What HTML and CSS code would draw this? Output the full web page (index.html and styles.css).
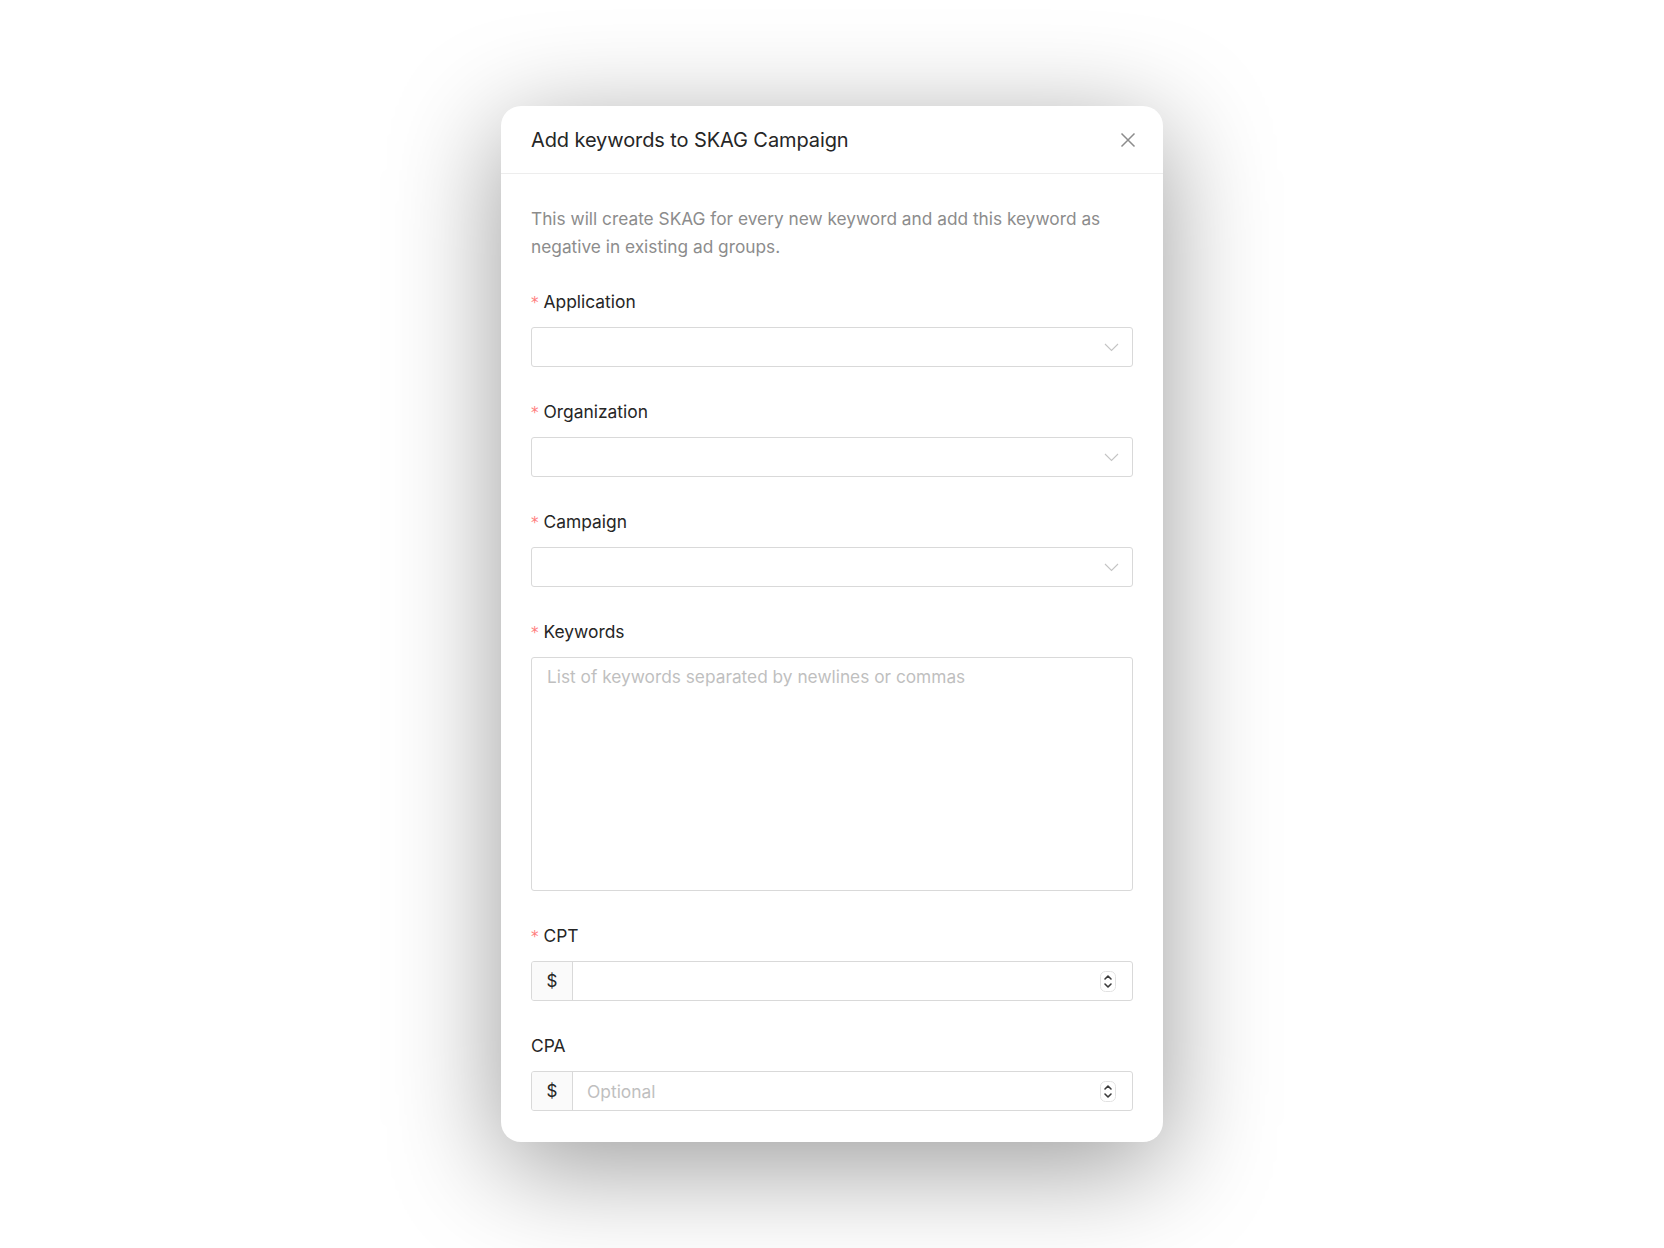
FILE: index.html
```html
<!DOCTYPE html>
<html lang="en">
<head>
    <meta charset="UTF-8">
    <meta name="viewport" content="width=device-width, initial-scale=1.0">
    <title>Add keywords to SKAG Campaign</title>
    <link rel="stylesheet" href="styles.css">
</head>
<body>
    <div class="modal">
        <div class="modal-header">
            <h2 class="modal-title">Add keywords to SKAG Campaign</h2>
            <button class="modal-close" type="button" aria-label="Close">
                <svg width="16" height="16" viewBox="0 0 16 16"><path d="M1.5 1.5 L14.5 14.5 M14.5 1.5 L1.5 14.5" /></svg>
            </button>
        </div>

        <div class="modal-body">
            <p class="intro">This will create SKAG for every new keyword and add this keyword as negative in existing ad groups.</p>

            <form class="form">
                <div class="form-item">
                    <label class="form-label required">Application</label>
                    <div class="select">
                        <svg class="select-arrow" width="15" height="9" viewBox="0 0 15 9"><path d="M1 1 L7.5 7.5 L14 1" /></svg>
                    </div>
                </div>

                <div class="form-item">
                    <label class="form-label required">Organization</label>
                    <div class="select">
                        <svg class="select-arrow" width="15" height="9" viewBox="0 0 15 9"><path d="M1 1 L7.5 7.5 L14 1" /></svg>
                    </div>
                </div>

                <div class="form-item">
                    <label class="form-label required">Campaign</label>
                    <div class="select">
                        <svg class="select-arrow" width="15" height="9" viewBox="0 0 15 9"><path d="M1 1 L7.5 7.5 L14 1" /></svg>
                    </div>
                </div>

                <div class="form-item">
                    <label class="form-label required" for="keywords">Keywords</label>
                    <textarea id="keywords" class="textarea" placeholder="List of keywords separated by newlines or commas"></textarea>
                </div>

                <div class="form-item">
                    <label class="form-label required" for="cpt">CPT</label>
                    <div class="input-group">
                        <span class="addon">$</span>
                        <div class="number">
                            <input id="cpt" class="number-input" type="text">
                            <svg class="spinner" width="16" height="21" viewBox="0 0 16 21">
                                <rect x="0.5" y="0.5" width="15" height="20" rx="5" />
                                <path d="M5 8 L8 5 L11 8 M5 13 L8 16 L11 13" />
                            </svg>
                        </div>
                    </div>
                </div>

                <div class="form-item">
                    <label class="form-label" for="cpa">CPA</label>
                    <div class="input-group">
                        <span class="addon">$</span>
                        <div class="number">
                            <input id="cpa" class="number-input" type="text" placeholder="Optional">
                            <svg class="spinner" width="16" height="21" viewBox="0 0 16 21">
                                <rect x="0.5" y="0.5" width="15" height="20" rx="5" />
                                <path d="M5 8 L8 5 L11 8 M5 13 L8 16 L11 13" />
                            </svg>
                        </div>
                    </div>
                </div>
            </form>
        </div>
    </div>
</body>
</html>
```

FILE: styles.css
```css
body {
    margin: 0;
    min-height: 100vh;
    background: #fff;
    font-family: Inter, "Noto Sans", sans-serif;
    color: #262626;
    display: flex;
    flex-direction: column;
    align-items: center;
    padding-top: 106px;
    box-sizing: border-box;
}
.modal {
    width: 662px;
    background: #fff;
    border-radius: 20px;
    box-shadow: 0 24px 110px rgba(0, 0, 0, 0.4);
    overflow: hidden;
}
.modal-header {
    display: flex;
    align-items: center;
    justify-content: space-between;
    height: 67px;
    padding: 0 27px 0 30px;
    border-bottom: 1px solid #ededed;
}
.modal-title {
    margin: 0;
    font-size: 20px;
    font-weight: 400;
    line-height: 28px;
    color: #262626;
    letter-spacing: -0.1px;
}
.modal-close {
    border: 0;
    background: none;
    padding: 0;
    width: 16px;
    height: 16px;
    cursor: pointer;
    display: flex;
}
.modal-close path {
    stroke: #8c8c8c;
    stroke-width: 1.5;
    fill: none;
}
.modal-body {
    padding: 31px 30px 31px;
}
.intro {
    margin: 0 0 27px;
    font-size: 17.3px;
    line-height: 27.5px;
    color: #8c8c8c;
}
.form-item {
    margin-bottom: 30px;
}
.form-item:last-child {
    margin-bottom: 0;
}
.form-label {
    display: block;
    height: 28px;
    padding-top: 1px;
    font-size: 17.4px;
    line-height: 28px;
    margin-bottom: 11px;
    color: #262626;
}
.required::before {
    content: "*";
    color: #ff7b7b;
    font-size: 15px;
    line-height: 1;
    margin-right: 5px;
    font-family: "DejaVu Sans", sans-serif;
}
.select {
    height: 40px;
    box-sizing: border-box;
    border: 1px solid #d9d9d9;
    border-radius: 3px;
    display: flex;
    align-items: center;
    justify-content: flex-end;
    padding-right: 13px;
}
.select-arrow path {
    stroke: #c4c4c4;
    stroke-width: 1.1;
    fill: none;
}
.textarea {
    display: block;
    width: 100%;
    height: 234px;
    box-sizing: border-box;
    border: 1px solid #d9d9d9;
    border-radius: 3px;
    padding: 5px 15px;
    font-family: inherit;
    font-size: 17.3px;
    line-height: 27.5px;
    color: #262626;
    resize: none;
    outline: none;
}
.textarea::placeholder,
.number-input::placeholder {
    color: #bfbfbf;
}
.input-group {
    display: flex;
    height: 40px;
    box-sizing: border-box;
    border: 1px solid #d9d9d9;
    border-radius: 3px;
    overflow: hidden;
}
.addon {
    width: 40px;
    flex: none;
    display: flex;
    align-items: center;
    justify-content: center;
    background: #fafafa;
    border-right: 1px solid #d9d9d9;
    font-size: 17px;
    color: #262626;
}
.number {
    flex: 1;
    display: flex;
    align-items: center;
    padding-right: 16px;
}
.number-input {
    flex: 1;
    min-width: 0;
    border: 0;
    outline: none;
    padding: 0 14px;
    height: 100%;
    font-family: inherit;
    font-size: 17.4px;
    color: #262626;
    background: transparent;
}
.spinner rect {
    fill: #fff;
    stroke: #e2e2e2;
}
.spinner path {
    fill: none;
    stroke: #3a3a3a;
    stroke-width: 1.6;
    stroke-linecap: round;
    stroke-linejoin: round;
}
```
